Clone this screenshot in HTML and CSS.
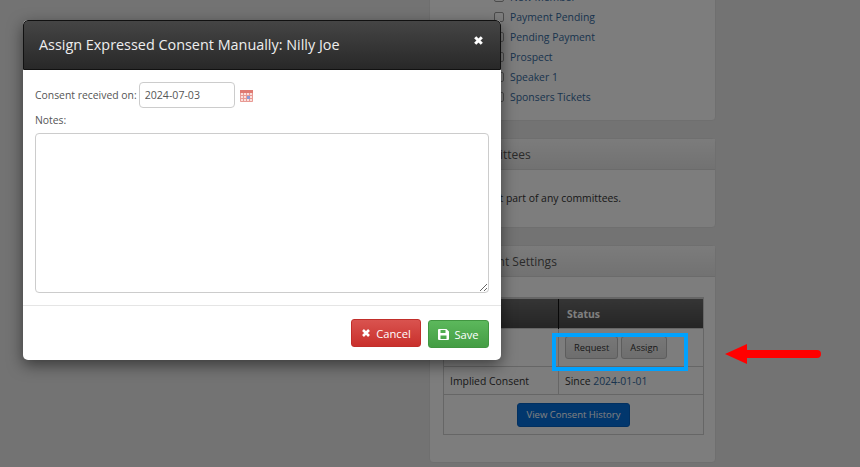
FILE: index.html
```html
<!DOCTYPE html>
<html>
  <head>
    <meta charset="UTF-8" />
    <title>Assign Expressed Consent</title>
    <link rel="stylesheet" href="styles.css">
  </head>
  <body>
    <!-- page behind the dialog -->
    <div class="sidebar">
      <div class="panel panel-groups">
        <ul class="group-list">
          <li><span class="check"></span><a href="#">New Member</a></li>
          <li><span class="check"></span><a href="#">Payment Pending</a></li>
          <li><span class="check"></span><a href="#">Pending Payment</a></li>
          <li><span class="check"></span><a href="#">Prospect</a></li>
          <li><span class="check"></span><a href="#">Speaker 1</a></li>
          <li><span class="check"></span><a href="#">Sponsers Tickets</a></li>
        </ul>
      </div>
      <div class="panel panel-committees">
        <div class="panel-heading">Committees</div>
        <div class="panel-body">Nilly is not part of any committees.</div>
      </div>
      <div class="panel panel-consent">
        <div class="panel-heading">Consent Settings</div>
        <div class="panel-body consent-body">
          <table class="consent-table">
            <thead>
              <tr><th class="col-type">Consent</th><th>Status</th></tr>
            </thead>
            <tbody>
              <tr class="row-expressed">
                <td>Expressed</td>
                <td><button class="btn-small">Request</button><button class="btn-small">Assign</button></td>
              </tr>
              <tr class="row-implied">
                <td>Implied Consent</td>
                <td>Since <a href="#">2024-01-01</a></td>
              </tr>
              <tr class="row-history">
                <td colspan="2"><button class="btn-history">View Consent History</button></td>
              </tr>
            </tbody>
          </table>
        </div>
      </div>
    </div>

    <div class="backdrop"></div>

    <div class="modal">
      <div class="modal-header">
        <h4>Assign Expressed Consent Manually: Nilly Joe</h4>
        <svg class="modal-close" width="11" height="11" viewBox="0 0 11 11">
          <path d="M2.2 2.2 L8.8 8.8 M8.8 2.2 L2.2 8.8" stroke="#fff" stroke-width="3" fill="none" />
        </svg>
      </div>
      <div class="modal-body">
        <div class="date-row">
          <label>Consent received on:</label>
          <input class="date-input" type="text" value="2024-07-03" />
          <svg class="calendar" width="13" height="13" viewBox="0 0 13 13">
            <rect x="0" y="1" width="13" height="12" fill="#fbe0dd" />
            <rect x="0" y="1" width="13" height="3" fill="#e07a72" />
            <path d="M0.5 4 V12.5 H12.5 V4 M3.5 4 V12.5 M6.5 4 V12.5 M9.5 4 V12.5 M0.5 6.5 H12.5 M0.5 9.5 H12.5" stroke="#e89a94" stroke-width="1" fill="none" />
            <rect x="7" y="7" width="3" height="3" fill="#8a9ad8" />
          </svg>
        </div>
        <label class="notes-label">Notes:</label>
        <textarea class="notes"></textarea>
      </div>
      <div class="modal-footer">
        <button class="btn btn-cancel">
          <svg width="10" height="10" viewBox="0 0 10 10"><path d="M2 2 L8 8 M8 2 L2 8" stroke="#fff" stroke-width="2.6" fill="none" /></svg>
          Cancel
        </button>
        <button class="btn btn-save">
          <svg width="11" height="11" viewBox="0 0 11 11"><path fill-rule="evenodd" d="M1 0 H8.5 L11 2.5 V10 a1 1 0 0 1 -1 1 H1 a1 1 0 0 1 -1 -1 V1 a1 1 0 0 1 1 -1 Z M2.5 1 V4 H7.5 V1 Z M2.5 6.5 V10 H8.5 V6.5 Z" fill="#fff" /></svg>
          Save
        </button>
      </div>
    </div>

    <!-- annotations drawn on the screenshot -->
    <div class="highlight"></div>
    <svg class="arrow" width="96" height="22" viewBox="0 0 96 22">
      <path d="M0 11 L22 1 V7 H92 a4 4 0 0 1 0 8 H22 V21 Z" fill="#ff0000" />
    </svg>
  </body>
</html>
```

FILE: styles.css
```css
html,
body {
  margin: 0;
  height: 467px;
  overflow: hidden;
}
body {
  background-color: #e6e6e6;
  font-family: "Open Sans", sans-serif;
  font-size: 10.4px;
  color: #333;
}
a {
  color: #33689c;
  text-decoration: none;
}

/* sidebar panels */
.sidebar {
  width: 287px;
  margin-left: 429px;
  margin-top: -30px;
  display: flex;
  flex-direction: column;
  row-gap: 17px;
}
.panel {
  background-color: #fafafa;
  border: 1px solid #dedede;
  border-radius: 4px;
  box-sizing: border-box;
}
.panel-heading {
  height: 31px;
  box-sizing: border-box;
  padding: 7px 12px 7px 33px;
  font-size: 12px;
  line-height: 17px;
  color: #555;
  background: linear-gradient(#f8f8f8, #e4e4e4);
  border-bottom: 1px solid #d6d6d6;
}
.panel-body {
  padding: 12px;
}
.panel-groups {
  height: 151px;
  padding-top: 16px;
}
.group-list {
  list-style: none;
  margin: 0;
  padding: 0 0 0 64px;
}
.group-list li {
  display: flex;
  align-items: center;
  height: 20px;
  column-gap: 6px;
}
.check {
  width: 8px;
  height: 8px;
  border: 1px solid #999;
  border-radius: 2px;
  background-color: #fff;
}
.panel-committees {
  height: 90px;
}
.panel-committees .panel-body {
  padding: 21px 12px 0 23px;
}
.panel-consent {
  height: 218px;
}
.consent-body {
  padding: 20px 11px 0 13px;
}
.consent-table {
  width: 261px;
  border-collapse: collapse;
  border: 1px solid #ccc;
  table-layout: fixed;
}
.consent-table th {
  height: 29px;
  padding: 0 8px;
  text-align: left;
  color: #fff;
  background: linear-gradient(#6a6a6a, #4a4a4a);
  border-top: 2px solid #ccc;
}
.consent-table .col-type {
  width: 98px;
  border-right: 1px solid #111;
}
.consent-table td {
  padding: 0 6px;
  border: 1px solid #ccc;
}
.row-expressed td {
  height: 37px;
}
.row-implied td {
  height: 27px;
}
.row-history td {
  height: 39px;
  text-align: center;
}
.btn-small {
  height: 23px;
  padding: 0 8px;
  margin-right: 3px;
  font-family: "Open Sans", sans-serif;
  font-size: 9.3px;
  color: #333;
  background: linear-gradient(#f0f0f0, #dcdcdc);
  border: 1px solid #bbb;
  border-radius: 3px;
}
.btn-history {
  height: 24px;
  padding: 0 9px;
  font-family: "Open Sans", sans-serif;
  font-size: 9.5px;
  color: #fff;
  background-color: #046edb;
  border: 1px solid #0460c0;
  border-radius: 3px;
}

/* dialog */
.backdrop {
  position: absolute;
  inset: 0;
  background-color: rgba(0, 0, 0, 0.5);
}
.modal {
  position: absolute;
  left: 23px;
  top: 20px;
  width: 478px;
  height: 340px;
  background-color: #fff;
  border-radius: 5px;
  box-shadow: 0 5px 15px rgba(0, 0, 0, 0.5);
  color: #555;
  display: flex;
  flex-direction: column;
}
.modal-header {
  height: 50px;
  box-sizing: border-box;
  padding: 0 15px 2px;
  display: flex;
  align-items: center;
  justify-content: space-between;
  background: linear-gradient(#454545, #282828);
  border: 1px solid #111;
  border-radius: 5px 5px 0 0;
}
.modal-header h4 {
  margin: 0;
  font-size: 14.4px;
  font-weight: 400;
  color: #eee;
}
.modal-close {
  margin: -8px 1px 0 0;
}
.modal-body {
  height: 236px;
  box-sizing: border-box;
  padding: 12px 12px 0;
  border-bottom: 1px solid #e5e5e5;
}
.date-row {
  display: flex;
  align-items: center;
  column-gap: 2px;
}
.date-input {
  width: 96px;
  height: 26px;
  box-sizing: border-box;
  padding: 0 5px;
  font-family: "Open Sans", sans-serif;
  font-size: 10.6px;
  color: #555;
  border: 1px solid #ccc;
  border-radius: 4px;
}
.calendar {
  margin: 1px 0 0 3px;
}
.notes-label {
  display: block;
  margin: 4px 0 5px;
  line-height: 16px;
}
.notes {
  display: block;
  width: 454px;
  height: 160px;
  box-sizing: border-box;
  border: 1px solid #ccc;
  border-radius: 4px;
}
.modal-footer {
  display: flex;
  justify-content: flex-end;
  align-items: flex-start;
  column-gap: 7px;
  padding: 13px 12px 0;
}
.btn {
  display: flex;
  align-items: center;
  justify-content: center;
  column-gap: 5px;
  height: 28px;
  padding: 0;
  font-family: "Open Sans", sans-serif;
  font-size: 11.2px;
  color: #fff;
  border-radius: 3px;
}
.btn-cancel {
  width: 70px;
  background: linear-gradient(#d9534f, #c9302c);
  border: 1px solid #c12e2a;
}
.btn-save {
  width: 61px;
  margin-top: 1px;
  background: linear-gradient(#5cb85c, #449d44);
  border: 1px solid #419641;
}

/* annotations */
.highlight {
  position: absolute;
  left: 552px;
  top: 333px;
  width: 128px;
  height: 30px;
  border: 4px solid #00a2ff;
}
.arrow {
  position: absolute;
  left: 725px;
  top: 343px;
}
```
